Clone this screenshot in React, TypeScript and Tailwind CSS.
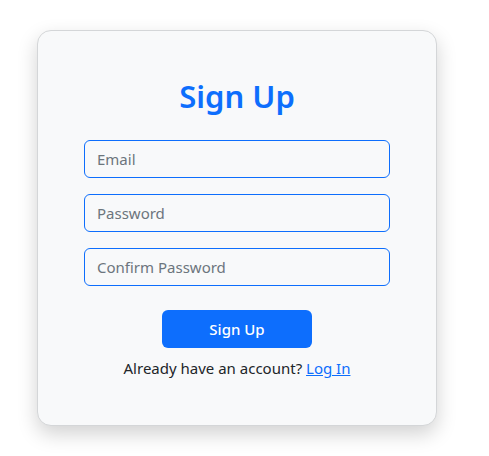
export default function App() {
  return (
    <div className="min-h-[456px] w-[489px] bg-white pt-[30px] pl-[37px]" style={{ fontFamily: '"Noto Sans", "Open Sans", sans-serif' }}>
      <div className="w-[400px] h-[396px] rounded-[14px] border border-[#d4d6d8] bg-[#f8f9fa] shadow-[0_8px_20px_rgba(0,0,0,0.18)] px-[46px] pt-[45px]">
        <h1 className="text-center text-[31px] leading-[40px] font-semibold text-[#0d6efd]">Sign Up</h1>
        <div className="mt-[24px] flex flex-col gap-[16px]">
          <input placeholder="Email" className="h-[38px] w-full rounded-[6px] border border-[#0d6efd] bg-transparent px-[12px] text-[15px] text-[#212529] placeholder:text-[#6c757d] outline-none" />
          <input placeholder="Password" type="password" className="h-[38px] w-full rounded-[6px] border border-[#0d6efd] bg-transparent px-[12px] text-[15px] text-[#212529] placeholder:text-[#6c757d] outline-none" />
          <input placeholder="Confirm Password" type="password" className="h-[38px] w-full rounded-[6px] border border-[#0d6efd] bg-transparent px-[12px] text-[15px] text-[#212529] placeholder:text-[#6c757d] outline-none" />
        </div>
        <div className="mt-[24px] flex justify-center">
          <button className="h-[38px] w-[150px] rounded-[6px] bg-[#0d6efd] text-[15px] font-medium text-white">Sign Up</button>
        </div>
        <p className="mt-[8px] text-center text-[15px] leading-[24px] text-[#212529]">
          Already have an account? <a href="#" className="text-[#0d6efd] underline">Log In</a>
        </p>
      </div>
    </div>
  );
}
